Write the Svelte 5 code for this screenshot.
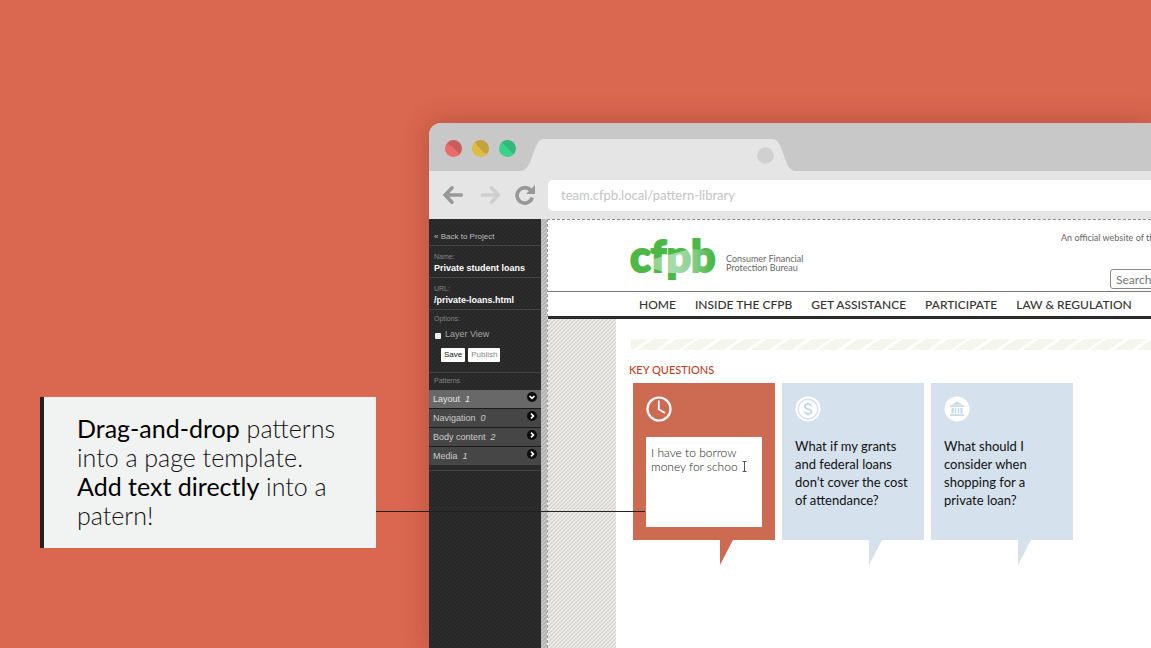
<script lang="ts">
  const lights = ['red', 'yellow', 'green'];
  const patterns = [
    { name: 'Layout', count: 1, open: true },
    { name: 'Navigation', count: 0, open: false },
    { name: 'Body content', count: 2, open: false },
    { name: 'Media', count: 1, open: false },
  ];
  const menu = ['HOME', 'INSIDE THE CFPB', 'GET ASSISTANCE', 'PARTICIPATE', 'LAW & REGULATION'];
  let answer = $state('I have to borrow\nmoney for schoo');
  let url = $state('team.cfpb.local/pattern-library');
  let layerView = $state(false);
</script>

<main class="scene">
  <aside class="callout">
    <p><strong>Drag-and-drop</strong> patterns<br />into a page template.<br /><strong>Add text directly</strong> into a<br />patern!</p>
    <span class="leader"></span>
  </aside>

  <section class="browser">
    <div class="tabs">
      <div class="lights">
        {#each lights as light}<span class="light {light}"></span>{/each}
      </div>
      <svg class="tab" viewBox="0 0 274 32" aria-hidden="true">
        <path d="M0 32C6 31 8 26 11 18C15 8 16 1 22 0H252C258 1 260 8 263 17C266 25 268 31 274 32Z" fill="#e5e5e5" />
        <circle cx="244.500" cy="16.500" r="8.300" fill="#d0d0d0" />
      </svg>
    </div>

    <div class="toolbar">
      <div class="history">
        <button aria-label="Back">
          <svg width="20" height="20" viewBox="0 0 20 20"><path d="M9 2.800L2.200 10L9 17.200M3 10H18.300" fill="none" stroke="#989898" stroke-width="3.600" stroke-linecap="round" stroke-linejoin="miter" /></svg>
        </button>
        <button aria-label="Forward">
          <svg width="20" height="20" viewBox="0 0 20 20"><path d="M12.500 2.800L19.300 10L12.500 17.200M3.500 10H18" fill="none" stroke="#cecece" stroke-width="3.600" stroke-linecap="round" stroke-linejoin="miter" overflow="visible" /></svg>
        </button>
        <button aria-label="Reload">
          <svg width="20" height="20" viewBox="0 0 20 20"><path d="M15.500 5.200A7.700 7.700 0 1 0 17.200 12.500" fill="none" stroke="#989898" stroke-width="3.600" /><path d="M20 0V9H11Z" fill="#989898" /></svg>
        </button>
      </div>
      <input class="address" aria-label="Address" bind:value={url} />
    </div>

    <div class="viewport">
      <aside class="panel">
        <div class="group back"><a href="#project">« Back to Project</a></div>
        <div class="group"><span class="label">Name:</span><span class="value">Private student loans</span></div>
        <div class="group"><span class="label">URL:</span><span class="value">/private-loans.html</span></div>
        <div class="group options">
          <span class="label">Options:</span>
          <label class="check"><input type="checkbox" bind:checked={layerView} />Layer View</label>
          <div class="actions"><button class="save">Save</button><button>Publish</button></div>
        </div>
        <div class="patterns">
          <span class="label">Patterns</span>
          <ul>
            {#each patterns as p}
              <li>
                <button class:open={p.open}>
                  <span>{p.name}</span><em>{p.count}</em>
                  <svg width="10" height="10" viewBox="0 0 10 10" aria-hidden="true">
                    <circle cx="5" cy="5" r="5" fill="#0c0c0c" />
                    <path d={p.open ? 'M2.600 4L5 6.400L7.400 4' : 'M4 2.600L6.400 5L4 7.400'} fill="none" stroke="#fff" stroke-width="1.700" />
                  </svg>
                </button>
              </li>
            {/each}
          </ul>
        </div>
      </aside>

      <div class="canvas">
        <div class="site">
          <header>
            <a class="brand" href="#home">
              <svg class="mark" width="88" height="60" viewBox="0 0 88 60">
                <defs>
                  <linearGradient id="beam" gradientUnits="userSpaceOnUse" x1="24" y1="0" x2="84" y2="0">
                    <stop offset="0" stop-color="#8fd08d" />
                    <stop offset="0.350" stop-color="#a6dcab" />
                    <stop offset="0.620" stop-color="#93d394" />
                    <stop offset="1" stop-color="#4db848" />
                  </linearGradient>
                  <pattern id="paint" patternUnits="userSpaceOnUse" width="88" height="60">
                    <rect width="88" height="60" fill="#4db848" />
                    <path d="M26 31L62 21L88 23V45H40L26 41Z" fill="url(#beam)" />
                  </pattern>
                </defs>
                <text x="2" y="44" fill="url(#paint)" stroke="url(#paint)" stroke-width="2">cfpb</text>
              </svg>
              <span class="tagline">Consumer Financial<br />Protection Bureau</span>
            </a>
            <div class="utility">
              <span>An official website of the</span>
              <input type="search" aria-label="Search" placeholder="Search" />
            </div>
          </header>
          <nav>
            {#each menu as item}<a href="#menu">{item}</a>{/each}
          </nav>
          <div class="body">
            <div class="content">
              <div class="band"></div>
              <h2>KEY QUESTIONS</h2>
              <div class="cards">
                <article class="card active">
                  <svg width="26" height="26" viewBox="0 0 26 26" aria-hidden="true">
                    <circle cx="13" cy="13" r="11.500" fill="none" stroke="#fff" stroke-width="2.200" />
                    <path d="M12.800 4.500V13.300L19 17" fill="none" stroke="#fff" stroke-width="1.800" />
                  </svg>
                  <div class="editor">
                    <textarea aria-label="Question text" bind:value={answer}></textarea>
                    <svg class="ibeam" width="5" height="11" viewBox="0 0 5 11" aria-hidden="true"><path d="M0.500 0.500H4.500M2.500 0.500V10.500M0.500 10.500H4.500" fill="none" stroke="#555" /></svg>
                  </div>
                </article>
                <article class="card">
                  <svg width="26" height="26" viewBox="0 0 26 26" aria-hidden="true">
                    <circle cx="13" cy="13" r="12.500" fill="#fff" />
                    <circle cx="13" cy="13" r="9.800" fill="none" stroke="#d5e1ed" stroke-width="1.400" />
                    <path d="M16.300 10.200C15.800 8.800 14.600 8.200 13 8.200C11.200 8.200 9.900 9.100 9.900 10.600C9.900 14 16.400 12 16.400 15.500C16.400 17 15 17.900 13.100 17.900C11.300 17.900 9.900 17.100 9.500 15.600M13 6.500V8.500M13 17.500V19.500" fill="none" stroke="#c6d7e8" stroke-width="1.800" />
                  </svg>
                  <p>What if my grants<br />and federal loans<br />don’t cover the cost<br />of attendance?</p>
                </article>
                <article class="card">
                  <svg width="26" height="26" viewBox="0 0 26 26" aria-hidden="true">
                    <circle cx="13" cy="13" r="12.500" fill="#fff" />
                    <path d="M13 5.500L18.500 8.800H7.500ZM6 9.200H20V11H6ZM7.500 12H9.700V17.500H7.500ZM10.700 12H12.300V17.500H10.700ZM13.700 12H15.300V17.500H13.700ZM16.300 12H18.500V17.500H16.300ZM6 18.200H20V20H6Z" fill="#c9d9e9" />
                  </svg>
                  <p>What should I<br />consider when<br />shopping for a<br />private loan?</p>
                </article>
              </div>
            </div>
          </div>
        </div>
      </div>
    </div>
  </section>
</main>

<style>
  :global(body) { margin: 0; background: #da6750; }
  * { box-sizing: border-box; }
  button, input, textarea { font: inherit; margin: 0; }
  a { color: inherit; text-decoration: none; }
  svg { display: block; flex: none; overflow: visible; }

  .scene {
    display: grid;
    grid-template-columns: minmax(240px, 336px) minmax(0, 1fr);
    column-gap: 53px;
    align-items: start;
    min-height: 100vh;
    padding-left: 40px;
    overflow: hidden;
    background: #da6750;
    font-family: Lato, "Liberation Sans", sans-serif;
  }

  .callout {
    position: relative;
    z-index: 2;
    margin-top: 397px;
    padding: 17px 20px 18px 33px;
    border-left: 4px solid #222;
    background: #f1f3f2;
    color: #111;
  }
  .callout p { margin: 0; font-size: 25px; line-height: 29px; font-weight: 300; white-space: nowrap; }
  .callout strong { font-weight: 400; color: #000; }
  .leader { position: absolute; left: 100%; top: 114px; width: 269px; height: 1px; background: #222; }

  .browser {
    display: flex;
    flex-direction: column;
    align-self: stretch;
    margin-top: 123px;
    border-radius: 12px 0 0 0;
    overflow: hidden;
    box-shadow: 0 0 28px rgba(70, 20, 10, 0.25);
    background: #e5e5e5;
  }
  .tabs { display: flex; align-items: flex-end; height: 48px; padding-left: 16px; gap: 5px; background: #c8c8c8; }
  .lights { display: flex; gap: 10px; padding-bottom: 14px; }
  .light { width: 17px; height: 17px; border-radius: 50%; }
  .red { background: linear-gradient(45deg, #eb6b6a 50%, #cb5c5c 50%); }
  .yellow { background: linear-gradient(45deg, #dfbb43 50%, #c3a43b 50%); }
  .green { background: linear-gradient(45deg, #38d388 50%, #32b979 50%); }
  .tab { width: 274px; height: 32px; }

  .toolbar { display: flex; align-items: center; gap: 13px; height: 48px; padding-left: 14px; }
  .history { display: flex; gap: 16px; }
  .history button { padding: 0; border: 0; background: none; }
  .address {
    flex: 1;
    min-width: 0;
    height: 31px;
    padding: 0 13px;
    border: 0;
    border-radius: 5px 0 0 5px;
    background: #fff;
    color: #c4c4c4;
    font-size: 13px;
    line-height: 16px;
  }

  .viewport { display: flex; flex: 1; }
  .panel {
    flex: 0 0 112px;
    background: linear-gradient(135deg, #2d2d2d 25%, #272727 25% 50%, #2d2d2d 50% 75%, #272727 75%) 0 0 / 4px 4px;
    color: #bdbdbd;
    font: 8px/10px "Liberation Sans", sans-serif;
  }
  .group { display: flex; flex-direction: column; padding: 6px 5px 3px; border-bottom: 1px solid #434343; }
  .back { padding-top: 13px; }
  .label { display: block; font-size: 7px; line-height: 10px; color: #858585; }
  .value { font-size: 9px; line-height: 12px; font-weight: 700; color: #fff; }
  .options { padding-top: 4px; }
  .check { display: flex; align-items: center; gap: 4px; margin-top: 4px; font-size: 9px; line-height: 12px; color: #a5a5a5; }
  .check input { appearance: none; width: 6px; height: 6px; margin: 3px 0 0 1px; border-radius: 1px; background: #eee; }
  .actions { display: flex; gap: 3px; padding: 8px 0 7px 7px; }
  .actions button { height: 14px; padding: 0 3px; border: 0; border-radius: 1px; background: #fff; color: #888; line-height: 14px; }
  .actions .save { color: #111; }
  .patterns { padding: 3px 0 5px; border-bottom: 1px solid #434343; }
  .patterns .label { padding-left: 5px; }
  ul { display: flex; flex-direction: column; gap: 1px; margin: 4px 0 0; padding: 0; list-style: none; background: #1b1b1b; }
  li button {
    display: flex;
    align-items: center;
    gap: 5px;
    width: 100%;
    height: 18px;
    padding: 0 4px;
    border: 0;
    background: #464646;
    color: #ccc;
    font-size: 9px;
    text-align: left;
  }
  li button.open { background: #686868; color: #e4e4e4; }
  li svg { margin: 0 0 4px auto; }

  .canvas {
    flex: 1;
    min-width: 0;
    padding-left: 6px;
    overflow: hidden;
    background: linear-gradient(135deg, #c6c6c6 25%, #b2b2b2 25% 50%, #c6c6c6 50% 75%, #b2b2b2 75%) 0 0 / 4px 4px;
  }
  .site {
    display: flex;
    flex-direction: column;
    min-width: 674px;
    height: 100%;
    border-top: 1px dashed #888;
    border-left: 1px dashed #999;
    background: #fff;
  }
  header { display: flex; justify-content: space-between; height: 72px; padding-left: 80px; border-bottom: 1px solid #777; }
  .brand { display: flex; gap: 10px; }
  .mark { margin-top: 8px; font: 900 43px Lato, sans-serif; }
  .tagline { padding-top: 34px; font-size: 9px; line-height: 9px; color: #666; }
  .utility { flex: 0 0 160px; display: flex; flex-direction: column; padding-top: 12px; font-size: 9px; line-height: 11px; color: #666; }
  .utility input { width: 111px; height: 20px; margin: 26px 0 0 auto; padding: 0 5px; border: 1px solid #888; border-radius: 3px; font-size: 12px; }
  .utility input::placeholder { color: #777; opacity: 1; }
  nav { display: flex; gap: 19px; height: 27px; padding-left: 91px; border-bottom: 3px solid #2a2a2a; font-size: 12px; line-height: 25px; font-weight: 500; color: #333; white-space: nowrap; }
  .body {
    flex: 1;
    display: flex;
    padding-left: 68px;
    background: linear-gradient(135deg, #ececea 25%, #d6d5d1 25% 50%, #ececea 50% 75%, #d6d5d1 75%) 0 0 / 4px 4px;
  }
  .content { flex: 1; padding: 20px 0 0 13px; background: #fff; }
  .band { height: 11px; margin-left: 2px; border-radius: 3px 0 0 3px; background: repeating-linear-gradient(145deg, #f4f6eb 0 10px, #fff 10px 13px); }
  h2 { margin: 12px 0 6px; font-size: 11px; line-height: 15px; font-weight: 500; color: #c2401f; }
  .cards { display: flex; gap: 7px; padding-left: 4px; }
  .card { position: relative; flex: 0 0 142px; height: 157px; padding: 13px; background: #d5e1ed; }
  .card::after { content: ""; position: absolute; left: 87px; top: 100%; width: 13px; height: 25px; background: inherit; clip-path: polygon(0 0, 100% 0, 0 100%); }
  .card p { margin: 15px 0 0; font-size: 13px; line-height: 18px; color: #111; white-space: nowrap; }
  .active { background: #cd6b52; }
  .editor { position: relative; margin-top: 15px; }
  textarea { display: block; width: 100%; height: 90px; padding: 9px 5px; border: 0; resize: none; overflow: hidden; background: #fff; color: #222; font-size: 12px; line-height: 14px; font-weight: 300; }
  .ibeam { position: absolute; left: 96px; top: 24px; }
</style>
